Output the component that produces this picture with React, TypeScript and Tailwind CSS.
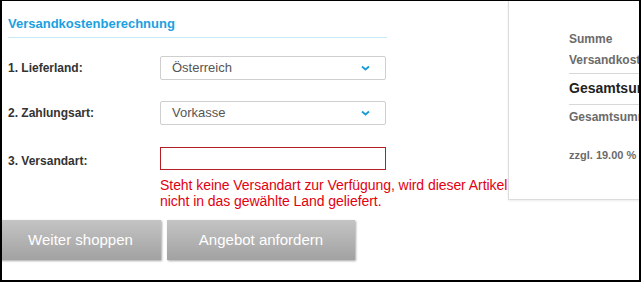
import React from "react";

function Chevron() {
  return (
    <svg width="9" height="6" viewBox="0 0 9 6" className="shrink-0">
      <path d="M1 1.5 L4.5 4.5 L8 1.5" fill="none" stroke="#1a9ad6" strokeWidth="1.8" />
    </svg>
  );
}

function Select({ value }: { value: string }) {
  return (
    <div className="w-[226px] h-[24px] border border-[#cfcfcf] rounded-[2px] bg-white flex items-center justify-between pl-[11px] pr-[15px] text-[13px] text-[#555]">
      <span>{value}</span>
      <Chevron />
    </div>
  );
}

export default function App() {
  return (
    <div
      className="w-[641px] h-[282px] overflow-hidden bg-white border-black border-l-2 border-r-2 border-b-2 border-t box-border flex"
      style={{ fontFamily: '"Liberation Sans", Arial, sans-serif' }}
    >
      <div className="w-[506px] shrink-0 flex flex-col">
        <div className="pl-[6px] pt-[15px]">
          <div className="w-[379px] border-b border-[#c8e9f6] pb-[6px] text-[13px] font-bold text-[#1aa1e1] leading-[15px]">
            Versandkostenberechnung
          </div>
          <div className="flex items-center mt-[18px]">
            <div className="w-[152px] shrink-0 text-[12px] font-bold text-[#333]">1. Lieferland:</div>
            <Select value="Österreich" />
          </div>
          <div className="flex items-center mt-[21px]">
            <div className="w-[152px] shrink-0 text-[12px] font-bold text-[#333]">2. Zahlungsart:</div>
            <Select value="Vorkasse" />
          </div>
          <div className="flex mt-[22px]">
            <div className="w-[152px] shrink-0 text-[12px] font-bold text-[#333] pt-[5px]">3. Versandart:</div>
            <div className="flex flex-col">
              <div className="w-[226px] h-[23px] border border-[#b51e24] bg-white" />
              <div className="mt-[7px] text-[14px] leading-[16px] tracking-[-0.05px] text-[#e3000f] whitespace-nowrap">
                Steht keine Versandart zur Verfügung, wird dieser Artikel
                <br />
                nicht in das gewählte Land geliefert.
              </div>
            </div>
          </div>
        </div>
        <div className="flex gap-[6px] mt-[11px] ml-[-2px]">
          <button className="w-[161px] h-[40px] bg-gradient-to-b from-[#c4c4c4] to-[#a2a2a2] text-white text-[15px] shadow-[1px_1px_2px_rgba(0,0,0,0.35)]">
            Weiter shoppen
          </button>
          <button className="w-[188px] h-[40px] bg-gradient-to-b from-[#c4c4c4] to-[#a2a2a2] text-white text-[15px] shadow-[1px_1px_2px_rgba(0,0,0,0.35)]">
            Angebot anfordern
          </button>
        </div>
      </div>
      <div className="w-[220px] shrink-0 h-[199px] border-l border-b border-[#dcdcdc] shadow-[0_1px_2px_rgba(0,0,0,0.08)] pl-[60px] pt-[30px] whitespace-nowrap">
        <div className="text-[12px] font-bold text-[#6b6b6b] leading-[16px]">Summe</div>
        <div className="text-[12px] font-bold text-[#6b6b6b] leading-[16px] mt-[5px]">Versandkosten:</div>
        <div className="border-t border-[#d8d8d8] mt-[5px] pt-[6px] text-[14px] font-bold text-[#222] leading-[16px]">Gesamtsumme:</div>
        <div className="border-t border-[#d8d8d8] mt-[8px] pt-[4px] text-[12px] font-bold text-[#6b6b6b] leading-[16px]">Gesamtsumme ohne MwSt.:</div>
        <div className="mt-[23px] text-[11px] font-bold text-[#6b6b6b] leading-[14px]">zzgl. 19.00 % MwSt.:</div>
      </div>
    </div>
  );
}
